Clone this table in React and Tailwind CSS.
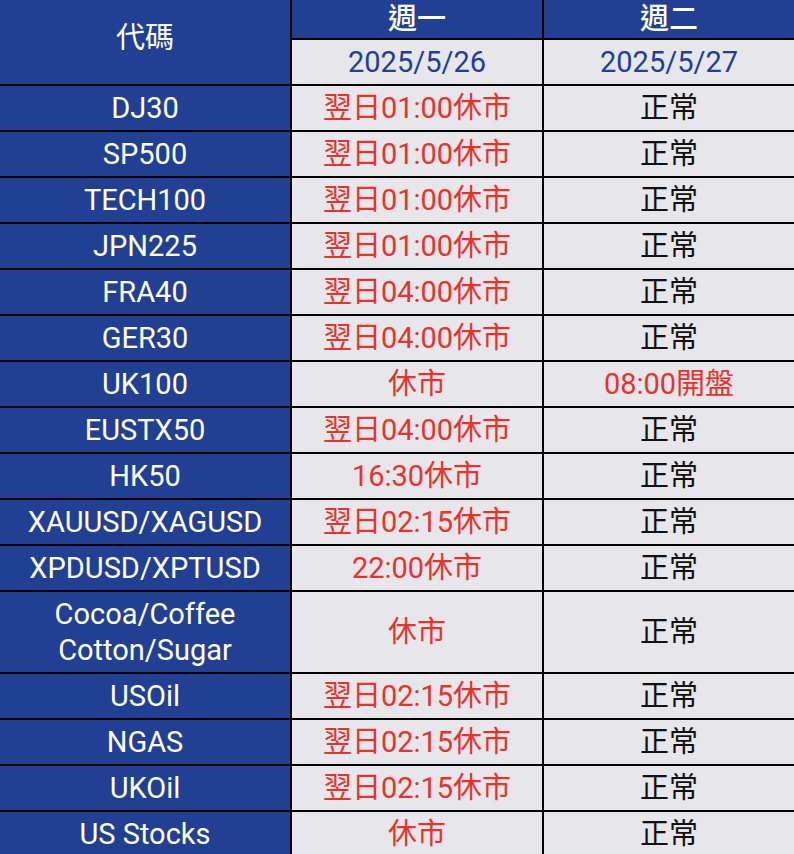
import React from "react";

const rows = [
  ["DJ30", "翌日01:00休市", "正常"],
  ["SP500", "翌日01:00休市", "正常"],
  ["TECH100", "翌日01:00休市", "正常"],
  ["JPN225", "翌日01:00休市", "正常"],
  ["FRA40", "翌日04:00休市", "正常"],
  ["GER30", "翌日04:00休市", "正常"],
  ["UK100", "休市", "08:00開盤"],
  ["EUSTX50", "翌日04:00休市", "正常"],
  ["HK50", "16:30休市", "正常"],
  ["XAUUSD/XAGUSD", "翌日02:15休市", "正常"],
  ["XPDUSD/XPTUSD", "22:00休市", "正常"],
  ["Cocoa/Coffee\nCotton/Sugar", "休市", "正常"],
  ["USOil", "翌日02:15休市", "正常"],
  ["NGAS", "翌日02:15休市", "正常"],
  ["UKOil", "翌日02:15休市", "正常"],
  ["US Stocks", "休市", "正常"],
];

function Cell({ children, className = "" }) {
  return (
    <div className={`flex items-center justify-center text-center ${className}`}>
      {children}
    </div>
  );
}

export default function App() {
  return (
    <div
      className="w-[794px] h-[854px] overflow-hidden bg-white"
      style={{ fontFamily: 'Roboto, "Noto Sans CJK TC", sans-serif' }}
    >
      <div className="grid grid-cols-[290px_250px_250px] gap-[2px] bg-black text-[29px] leading-[36px]">
        {/* header */}
        <Cell className="row-span-2 pb-[8px] bg-[#213f93] text-white">代碼</Cell>
        <Cell className="h-[38px] bg-[#213f93] text-white font-medium">週一</Cell>
        <Cell className="h-[38px] bg-[#213f93] text-white font-medium">週二</Cell>
        <Cell className="h-[44px] bg-[#e6e6eb] text-[#213f93]">2025/5/26</Cell>
        <Cell className="h-[44px] bg-[#e6e6eb] text-[#213f93]">2025/5/27</Cell>

        {rows.map(([sym, mon, tue]) => {
          const tall = sym.includes("\n");
          const h = tall ? "h-[80px]" : "h-[44px]";
          return (
            <React.Fragment key={sym}>
              <Cell className={`${h} bg-[#213f93] text-white whitespace-pre-line`}>{sym}</Cell>
              <Cell className={`${h} bg-[#e6e6eb] text-[#e8332b]`}>{mon}</Cell>
              <Cell className={`${h} bg-[#e6e6eb] ${tue === "正常" ? "text-[#111111]" : "text-[#e8332b]"}`}>
                {tue}
              </Cell>
            </React.Fragment>
          );
        })}
      </div>
    </div>
  );
}
